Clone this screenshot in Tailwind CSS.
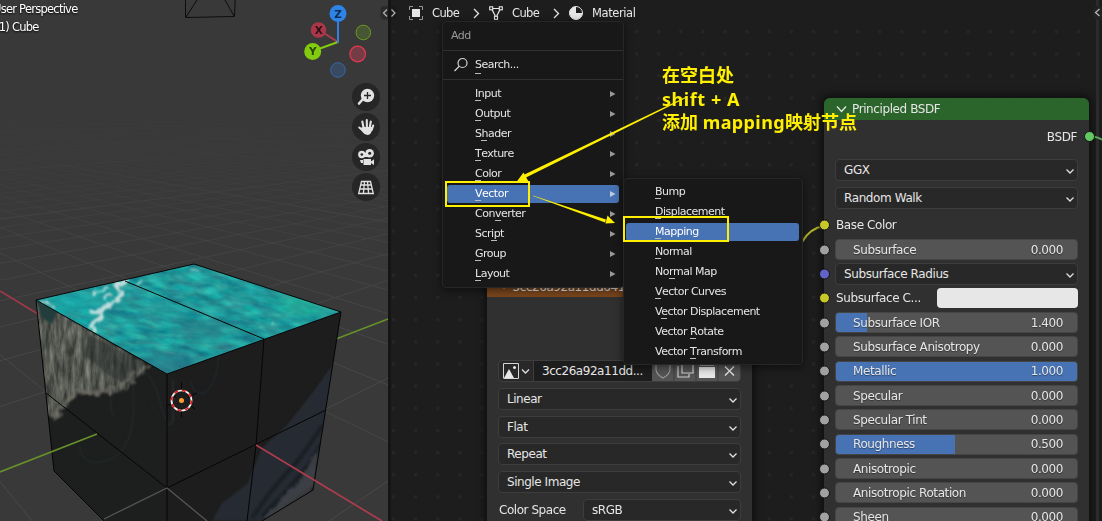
<!DOCTYPE html>
<html lang="en">
<head>
<meta charset="utf-8">
<title>Shader Editor</title>
<script src="https://cdn.jsdelivr.net/npm/@tailwindcss/browser@4"></script>
</head>
<body class="h-[521px] w-[1102px] overflow-hidden bg-[#1d1d1d] text-[#e6e6e6]" style="font-family:'DejaVu Sans',sans-serif">
<div class="relative flex h-[521px] w-[1102px] overflow-hidden">

<!-- 3D viewport -->
<section class="relative h-full w-[388px] shrink-0 overflow-hidden bg-[#393939]">
  <svg class="absolute inset-0" width="388" height="521" viewBox="0 0 388 521">
    <defs>
      <linearGradient id="fade" x1="0" y1="100" x2="0" y2="330" gradientUnits="userSpaceOnUse">
        <stop offset="0" stop-color="#000"/><stop offset=".25" stop-color="#333"/><stop offset=".6" stop-color="#aaa"/><stop offset="1" stop-color="#fff"/>
      </linearGradient>
      <mask id="far" maskUnits="userSpaceOnUse" x="0" y="0" width="388" height="521"><rect y="100" width="388" height="421" fill="url(#fade)"/></mask>
      <filter id="water" x="0" y="0" width="1" height="1" color-interpolation-filters="sRGB">
        <feTurbulence type="fractalNoise" baseFrequency=".05 .15" numOctaves="4" seed="8"/>
        <feColorMatrix values=".22 0 0 0 .02  .1 .38 0 0 .36  .05 .25 .05 0 .43  0 0 0 0 1"/>
      </filter>
      <filter id="foam" x="0" y="0" width="1" height="1" color-interpolation-filters="sRGB">
        <feTurbulence type="fractalNoise" baseFrequency=".22 .05" numOctaves="4" seed="4"/>
        <feColorMatrix values=".5 0 0 0 .11  .5 0 0 0 .12  .46 0 0 0 .11  0 0 0 0 1"/>
      </filter>
      <filter id="rough" x="-.2" y="-.2" width="1.4" height="1.4"><feTurbulence type="fractalNoise" baseFrequency=".15" numOctaves="3" seed="2" result="n"/><feDisplacementMap in="SourceGraphic" in2="n" scale="8" xChannelSelector="R" yChannelSelector="G"/><feGaussianBlur stdDeviation=".8"/></filter>
      <filter id="b1" x="-.3" y="-.3" width="1.6" height="1.6"><feGaussianBlur stdDeviation="1"/></filter>
      <filter id="b6" x="-.5" y="-.5" width="2" height="2"><feGaussianBlur stdDeviation="8"/></filter>
      <clipPath id="top"><path d="M36 300 194 264 341 312 167 374Z"/></clipPath>
      <clipPath id="left"><path d="M36 300 167 374V521H104L54 471Z"/></clipPath>
      <clipPath id="right"><path d="M167 374 341 312 313 490 262 521H167Z"/></clipPath>
      <mask id="foamArea" maskUnits="userSpaceOnUse" x="30" y="290" width="150" height="150"><path d="M34 296 150 366 138 376 130 388 116 393 94 394 78 393 66 408 56 420 46 417Z" fill="#fff" filter="url(#rough)"/></mask>
    </defs>
    <g id="grid" mask="url(#far)" stroke="#4c4c4c" fill="none"></g>
    <path d="M0 291 38 314" stroke="#9d3a4a" stroke-width="1.6"/>
    <path d="M336 339 388 319" stroke="#66902a" stroke-width="1.6"/>
    <path d="M185.500 0V17.500L234.500 16.500 235.200 0M186 17 197 0M234 16 225 0" stroke="#0d0d0d" fill="none"/>
    <g clip-path="url(#left)">
      <path d="M30 290H170V521H30Z" fill="#1d1e1e"/>
      <g mask="url(#foamArea)"><rect x="30" y="290" width="130" height="140" filter="url(#foam)" opacity=".9"/></g>
      <path d="M90 335 145 363 128 385 108 375 84 355Z" fill="#25292a" opacity=".5" filter="url(#b1)"/>
      <path d="M36 300 57 311 52 324 42 318Z" fill="#213c3a" filter="url(#b1)"/>
      <path d="M52 416 66 402 76 391 100 393 124 384 134 372" stroke="#77756c" stroke-width="4" fill="none" opacity=".6" filter="url(#rough)"/>
      <path d="M133 385Q136 420 128 440T100 462 80 445M146 372Q157 386 160 402T171 424M112 398Q108 412 116 418M150 405l6 6" stroke="#33403f" fill="none" opacity=".6" filter="url(#b1)"/>
    </g>
    <g clip-path="url(#right)">
      <path d="M160 300H345V521H160Z" fill="#1d1d1d"/>
      <path d="M333 364 316 388 288 424 262 448 247 484 222 503 212 521H262L320 480Z" fill="#252b32" filter="url(#b1)"/>
      <path d="M323 425 300 458 272 490 252 518M324 440 308 466 280 498 262 516" stroke="#191c20" stroke-width="3" fill="none" filter="url(#b1)"/>
      <path d="M318 450 298 482 276 504 262 521 300 508 314 488Z" fill="#4b4f52" opacity=".6" filter="url(#rough)"/>
      <path d="M219 355Q217 385 204 393 194 396 190 380" stroke="#243038" stroke-width="1.500" fill="none" opacity=".6" filter="url(#b1)"/>
      <path d="M167 424q5 2 6-4v-40" stroke="#303a3d" fill="none" filter="url(#b1)"/>
    </g>
    <g clip-path="url(#top)">
      <g transform="rotate(8 190 320)"><rect x="10" y="220" width="360" height="200" filter="url(#water)"/></g>
      <ellipse cx="305" cy="303" rx="28" ry="9" fill="#25c79c" opacity=".6" filter="url(#b6)"/>
      <ellipse cx="75" cy="304" rx="30" ry="10" fill="#14b6b4" opacity=".6" filter="url(#b6)"/>
      <ellipse cx="165" cy="366" rx="35" ry="9" fill="#2c6b80" opacity=".8" filter="url(#b6)"/>
      <ellipse cx="205" cy="328" rx="28" ry="8" fill="#2c7380" opacity=".6" filter="url(#b6)"/>
      <g stroke="#d3e5e4" fill="none" opacity=".9" filter="url(#rough)">
        <path d="M128 280 116 286 122 291 118 301 104 307 98 313 90 311M104 306 100 319 91 325 94 331" stroke-width="3.500"/>
        <path d="M42 301 54 307M190 269 200 271M112 294 104 298M145 281 136 284M92 294 108 287M270 324h3" stroke-width="2"/>
      </g>
    </g>
    <g stroke="#050505" fill="none" stroke-width="1">
      <path d="M36 300 194 264 341 312 167 374ZM125 281 264 339M36 300 54 471 104 521M341 312 313 490 262 521M167 374V521M264 339 256 445 247 521M46 393 167 488 326 410" />
    </g>
    <path d="M104 519 167 488 207 521" stroke="#555" stroke-width="1.300" fill="none"/>
    <path d="M0 472 97 434" stroke="#66902a" stroke-width="1.700"/>
    <path d="M256 445 382 521" stroke="#ad3c4d" stroke-width="1.700"/>
    <g stroke="#070707"><path d="M181.500 382v9M181.500 408v9M166 406l8-3M188 397l9-4M171 394l5 3M189 405l6 4"/></g>
    <circle cx="181.500" cy="400.500" r="10" fill="none" stroke="#f4f4f4" stroke-width="1.700"/>
    <circle cx="181.500" cy="400.500" r="10" fill="none" stroke="#e31818" stroke-width="1.700" stroke-dasharray="3.927 3.927"/>
    <circle cx="181.500" cy="400.500" r="2.500" fill="#ff9d2e"/>

    <!-- navigation gizmo -->
    <g stroke-width="2" fill="none"><path d="M338 42 319 30" stroke="#b23a4e"/><path d="M338 42 313 51" stroke="#84c90f"/><path d="M338 43V14" stroke="#2f80e0"/></g>
    <circle cx="338" cy="13.500" r="8.500" fill="#2e83e6"/><circle cx="318.500" cy="30" r="7.800" fill="#aa3749"/><circle cx="312.700" cy="51.500" r="8.500" fill="#82cb0e"/>
    <circle cx="363.300" cy="32.500" r="7.300" fill="#485733" stroke="#6b9a20"/><circle cx="357.700" cy="54" r="7.800" fill="#743c45" stroke="#ea3751" stroke-width="1.200"/><circle cx="338" cy="70" r="7.300" fill="#394a60" stroke="#3468a8"/>
    <g font-family="DejaVu Sans" font-weight="bold" font-size="10.500" text-anchor="middle"><text x="338" y="17.500" fill="#0e2d52">Z</text><text x="318.700" y="34" fill="#2c1016">X</text><text x="312.800" y="55.300" fill="#2b4508">Y</text></g>

    <!-- navigation buttons -->
    <g fill="#262626"><circle cx="366" cy="97" r="14"/><circle cx="366" cy="127" r="14"/><circle cx="366" cy="157" r="14"/><circle cx="366" cy="187" r="14"/></g>
    <g fill="#e2e2e2">
      <circle cx="367.500" cy="95.500" r="6.700"/><path d="M363 99 359 103.500" stroke="#e2e2e2" stroke-width="2.600" stroke-linecap="round"/><path d="M364 95.500h7M367.500 92v7" stroke="#262626" stroke-width="1.300"/>
      <path d="M362.300 121.500 363.600 128M366.800 120 366.900 128M370.800 121.500 369.700 128M373.200 125.500 371.700 130M359.300 127.500 363.500 131" stroke="#e2e2e2" stroke-width="2.100" stroke-linecap="round"/><path d="M362.500 127H372.200L371.800 131Q370.500 135 367.500 135 364.500 135 362.500 132L360 128.500Z"/>
      <circle cx="361.800" cy="154.500" r="3.700"/><circle cx="369.600" cy="153.300" r="4.300"/><path d="M361.500 153H370V157H361.500Z"/><path d="M363.500 159H371V165H363.500ZM371 161.500 374 159.300V165L371 163ZM360 160h3v3h-2z"/>
      <circle cx="361.800" cy="154.500" r="1.300" fill="#262626"/><circle cx="369.700" cy="153.300" r="1.500" fill="#262626"/>
      <path d="M361.500 181.500H370.500L373.300 193.500H358.700ZM360.500 185H371.500M359.500 189H372.500M364.500 181.500 363.400 193.500M367.500 181.500 368.600 193.500" fill="none" stroke="#e2e2e2" stroke-width="1.300"/>
    </g>
    <path d="M388 6H384Q380.500 6 380.500 10V15Q380.500 19.500 384 19.500H388Z" fill="#2a2a2a"/>
    <path d="M387 9.500 383.500 13l3.500 3.500" stroke="#b5b5b5" stroke-width="1.200" fill="none"/>
  </svg>
  <div class="absolute -left-[7px] top-0 whitespace-nowrap text-[11.500px] leading-[18px] tracking-[-0.750px] text-white [text-shadow:0_1px_2px_#000]"><p>User Perspective</p><p class="pl-0.5">(1) Cube</p></div>
</section>
<div class="h-full w-[3px] shrink-0 bg-[#151515]"></div>

<!-- Shader editor -->
<section class="relative h-full flex-1 overflow-hidden bg-[#1d1d1d]">
  <svg class="absolute inset-0" width="711" height="521">
    <defs><pattern id="dots" x="1" y="8" width="22.100" height="22.150" patternUnits="userSpaceOnUse"><rect width="3" height="3" fill="#262626"/></pattern></defs>
    <rect y="26" width="705" height="495" fill="url(#dots)"/>
    <path d="M411 242Q419 228 433 226" stroke="#b5b52b" stroke-width="2.200" fill="none"/>
  </svg>
  <header class="relative flex h-[26px] items-center text-[11.500px] tracking-[-0.600px] text-[#e8e8e8]">
    <svg class="shrink-0" width="254" height="26" viewBox="391 0 254 26" fill="none">
      <path d="M391 6h3q3 0 3 4v5q0 4-3 4h-3z" fill="#1a1a1a"/>
      <path d="M391.500 9.500 395 13l-3.500 3.500" stroke="#b5b5b5" stroke-width="1.200"/>
      <rect x="412" y="9" width="8" height="8" fill="#e6e6e6"/>
      <path d="M409.500 10V6.500H413M419 6.500H422.500V10M422.500 16V19.500H419M413 19.500H409.500V16" stroke="#969696"/>
      <path d="M474 9l4.500 4.500L474 18M554 9l4.500 4.500L554 18" stroke="#e6e6e6" stroke-width="1.300"/>
      <path d="M491.500 8.500H500.500L496 17.500Z" stroke="#e6e6e6" stroke-width="1.200"/><g fill="#1d1d1d" stroke="#e6e6e6" stroke-width="1.100"><rect x="489.700" y="6.800" width="3" height="3"/><rect x="499.300" y="6.800" width="3" height="3"/><rect x="494.500" y="16.300" width="3" height="3"/></g>
      <circle cx="576" cy="13" r="6.500" stroke="#e6e6e6"/><path d="M576 13V6.500A6.500 6.500 0 0 0 569.500 13ZM576 13V19.500A6.500 6.500 0 0 0 582.500 13Z" fill="#e6e6e6"/><path d="M576 13H569.500A6.500 6.500 0 0 0 576 19.500Z" fill="#e6e6e6"/>
    </svg>
    <div class="absolute left-0 top-[1px] flex h-full items-center"><span class="ml-[41px] w-20">Cube</span><span class="w-20">Cube</span><span class="tracking-[-0.400px]">Material</span></div>
  </header>

  <!-- image texture node -->
  <article class="absolute left-[96px] top-[276px] h-[260px] w-[265px] rounded-md bg-[#303030] text-[12px] tracking-[-0.450px] shadow-[0_0_7px_3px_#101010]">
    <h2 class="flex h-[21px] items-center rounded-t-md bg-[#79461d] pl-[15px]"><span class="mr-[7px] text-[8px]">▾</span><span>3cc26a92a11dd64192</span></h2>
    <div class="flex flex-col gap-[6px] px-[11px] pt-[63px]" id="texrows"></div>
  </article>

  <!-- principled node -->
  <article class="absolute left-[433px] top-[98px] h-[440px] w-[265px] rounded-md bg-[#303030] text-[12px] tracking-[-0.4px] shadow-[0_0_7px_3px_#101010]">
    <h2 class="flex h-[22px] items-center rounded-t-md bg-[#2b652b] pl-[12px]"><svg width="16" height="10" viewBox="0 0 16 10"><path d="M1 2.500 5.500 7.500 10 2.500" fill="none" stroke="#e6e6e6" stroke-width="1.300"/></svg><span>Principled BSDF</span></h2>
    <div class="relative mb-[2px] flex h-[34px] items-center justify-end pr-3"><span>BSDF</span><i class="absolute -right-[6px] top-[11px] size-[11px] rounded-full border border-[#141414] bg-[#63c763]"></i></div>
    <div id="bsdf" class="relative"></div>
  </article>
  <div class="absolute left-[705px] top-0 h-full w-[3px] bg-[#2b2b2b]"></div>
  <svg class="absolute right-0 top-0" width="14" height="150" viewBox="1088 0 14 150" fill="none">
    <path d="M1102 6H1097Q1093 6 1093 10V15Q1093 19.500 1097 19.500H1102Z" fill="#222"/>
    <path d="M1099.500 9 1095.500 12.500l4 3.500" stroke="#bbb" stroke-width="1.200"/>
    <path d="M1095 137Q1098 137.500 1102 139.500" stroke="#56a65a" stroke-width="2"/>
  </svg>
</section>

<!-- Add menu -->
<nav class="absolute left-[442px] top-[21px] h-[267px] w-[182px] rounded border border-[#262626] bg-[#181818] text-[11px] tracking-[-0.500px] shadow-[0_2px_8px_#0008]">
  <h3 class="flex h-[29px] items-center border-b border-[#303030] pl-2 text-[#999]">Add</h3>
  <div class="flex h-[29px] items-center border-b border-[#303030] pl-[10px]"><svg class="mr-1.5" width="16" height="16" viewBox="0 0 16 16" fill="none" stroke="#d5d5d5" stroke-width="1.200"><circle cx="9.500" cy="6" r="4.500"/><path d="M6.300 9.300 1.500 14"/></svg><span class="relative">Search...<i class="absolute -bottom-px left-0 h-px w-[6px] bg-[#bbb]"></i></span></div>
  <div id="addmenu" class="pt-1"></div>
</nav>
<!-- Vector submenu -->
<nav id="submenu" class="absolute left-[623px] top-[178px] h-[187px] w-[180px] rounded border border-[#262626] bg-[#181818] pt-[3px] text-[11px] tracking-[-0.500px] shadow-[0_2px_8px_#0008]"></nav>

<!-- annotations -->
<svg class="absolute inset-0" width="1102" height="521" fill="none">
  <g stroke="#ffef00" stroke-width="2"><rect x="446" y="182" width="83" height="24"/><rect x="624" y="217" width="104" height="24"/></g>
  <g fill="#ffef00"><path d="M686 98 526 177.500 524.500 174.500 685.500 97ZM516.500 182 523.500 172.500 528.500 181.500Z"/><path d="M533 195.500 606 219.500 605 222.500 533 196ZM615 223 607.500 215.500 605.500 223.500Z"/></g>
</svg>
<div class="absolute left-[662px] top-[64px] whitespace-nowrap text-[18px] font-bold leading-[23.500px] text-[#ffef00]" style="font-family:'Noto Sans','Noto Sans CJK SC',sans-serif"><p>在空白处</p><p class="tracking-[0.550px]">shift + A</p><p>添加 <span class="tracking-[0.400px]">mapping</span>映射节点</p></div>
</div>

<script>
const arrow = '<svg class="ml-auto mr-[2px] mt-[3px] shrink-0" width="10" height="7" viewBox="0 0 10 7"><path d="M1.500 1.500 5 5 8.500 1.500" fill="none" stroke="#e0e0e0" stroke-width="1.300"/></svg>';
const box = 'flex h-[22px] items-center rounded border border-[#3d3d3d] bg-[#282828] ';
const drop = (t, c = '') => `<div class="${box} pl-2 ${c}"><span>${t}</span>${arrow}</div>`;
document.getElementById('texrows').innerHTML =
  `<div class="flex h-[22px] overflow-hidden rounded border border-[#3d3d3d] bg-[#282828]"><svg class="shrink-0" width="34" height="20" viewBox="0 0 34 20" fill="none"><path d="M4.500 17V2.500H19.500V17.500H4.500" stroke="#d5d5d5"/><path d="M5 17 10 8 15 17Z" fill="#e6e6e6"/><circle cx="15.500" cy="6.500" r="1.500" fill="#e6e6e6"/><path d="M23 8.500 26.500 12 30 8.500" stroke="#e0e0e0" stroke-width="1.300"/></svg><span class="flex w-[119px] shrink-0 items-center border-l border-[#3d3d3d] bg-[#1d1d1d] pl-2">3cc26a92a11dd...</span><svg width="88" height="20" viewBox="0 0 88 20"><path d="M0 0H88V20H0Z" fill="#545454"/><path d="M22 0V20M44 0V20M66 0V20" stroke="#3d3d3d"/><path d="M4 3 11 1 18 3V9Q17 14 11 17 5 14 4 9Z" fill="none" stroke="#999" stroke-width="1.200"/><path d="M30 1H41V12H30ZM26 5V16H37V13" fill="none" stroke="#ccc" stroke-width="1.200"/><path d="M47 6H63V17H47ZM48 1H62V4.500H48Z" fill="#e6e6e6"/><path d="M73 5.500 82 14.500M82 5.500 73 14.500" stroke="#e6e6e6" stroke-width="1.300"/></svg></div>` +
  drop('Linear') + drop('Flat') + drop('Repeat', '-mt-px') + drop('Single Image') +
  `<div class="flex items-center"><span class="w-[85px] shrink-0 pl-px">Color Space</span>${drop('sRGB', 'flex-1')}</div>`;

const rows = [['d','GGX'],['d','Random Walk'],['l','Base Color','#c7c729'],['s','Subsurface','0.000',0],['d','Subsurface Radius','#6363c7'],['c','Subsurface C...','#c7c729'],['s','Subsurface IOR','1.400',13],['s','Subsurface Anisotropy','0.000',0],['s','Metallic','1.000',100],['s','Specular','0.000',0],['s','Specular Tint','0.000',0],['s','Roughness','0.500',49.500],['s','Anisotropic','0.000',0],['s','Anisotropic Rotation','0.000',0],['s','Sheen','0.000',0]];
const sock = c => `<i class="absolute -left-[5.500px] top-1/2 size-[11px] -translate-y-1/2 rounded-full border border-[#141414]" style="background:${c}"></i>`;
document.getElementById('bsdf').innerHTML = rows.map((r, i) => {
  const [k, t, v, p] = r;
  const h = i < 2 ? 'h-[28px]' : i === 2 ? 'h-[25.500px]' : 'h-[24.330px]';
  let body;
  if (k === 'd') body = `<div class="flex-1">${drop(t)}</div>`;
  else if (k === 'l') body = `<span class="pl-px">${t}</span>`;
  else if (k === 'c') body = `<span class="w-[102px] pl-px">${t}</span><b class="h-5 flex-1 rounded bg-[#e7e7e7]"></b>`;
  else body = `<div class="relative flex h-[21px] flex-1 items-center overflow-hidden rounded border border-[#454545] bg-[#545454] pl-[17px] pr-[14px] [text-shadow:0_1px_1px_#0006]"><b class="absolute inset-y-0 left-0 bg-[#4772b3]" style="width:${p}%"></b><span class="relative">${t}</span><span class="relative ml-auto">${v}</span></div>`;
  const color = k === 's' ? '#a1a1a1' : v;
  return `<div class="relative flex ${h} items-center px-[11px]">${color ? sock(color) : ''}${body}</div>`;
}).join('');

const key = (t, n) => `<span class="relative whitespace-pre">${t.slice(0, n)}<span class="relative">${t[n]}<i class="absolute -bottom-px left-0 h-px w-[6px] bg-[#bbb]"></i></span>${t.slice(n + 1)}</span>`;
document.getElementById('addmenu').innerHTML = [['Input',0],['Output',0],['Shader',1],['Texture',0],['Color',0],['Vector',0],['Converter',3],['Script',3],['Group',0],['Layout',0]].map(([t, n]) =>
  `<div class="mx-1 flex h-5 items-center py-px"><div class="flex h-[18px] flex-1 items-center rounded-[3px] pl-7 ${t === 'Vector' ? 'bg-[#4772b3] text-white' : ''}">${key(t, n)}<svg class="ml-auto mr-[3px]" width="6" height="8"><path d="M0 1 5.500 4 0 7Z" fill="${t === 'Vector' ? '#bcd' : '#999'}"/></svg></div></div>`).join('');
document.getElementById('submenu').innerHTML = [['Bump',0],['Displacement',0],['Mapping',0],['Normal',0],['Normal Map',2],['Vector Curves',0],['Vector Displacement',1],['Vector Rotate',7],['Vector Transform',7]].map(([t, n]) =>
  `<div class="ml-[2px] mr-[3px] flex h-5 items-center py-px"><div class="flex h-[18px] flex-1 items-center rounded-[3px] pl-[29px] ${t === 'Mapping' ? 'bg-[#4772b3] text-white' : ''}">${key(t, n)}</div></div>`).join('');

// Perspective floor grid: each family of parallels shares one vanishing point on the horizon.
const horizon = 100;
let d = '';
for (let k = -3; k < 70; k++) {
  const a = 1.64 + k * .41, b = 2.54 + k * .54, o = k % 10 ? Math.max(.12, .8 - k * .02) : 1;
  if (k && a > 0) d += `<path opacity="${o}" d="M-313 ${horizon}L${-313 + 500 * a} ${horizon + 500}"/>`;
  if (k && b > 0) d += `<path opacity="${o}" d="M944 ${horizon}L${944 - 500 * b} ${horizon + 500}"/>`;
}
document.getElementById('grid').innerHTML = d;
</script>
</body>
</html>
